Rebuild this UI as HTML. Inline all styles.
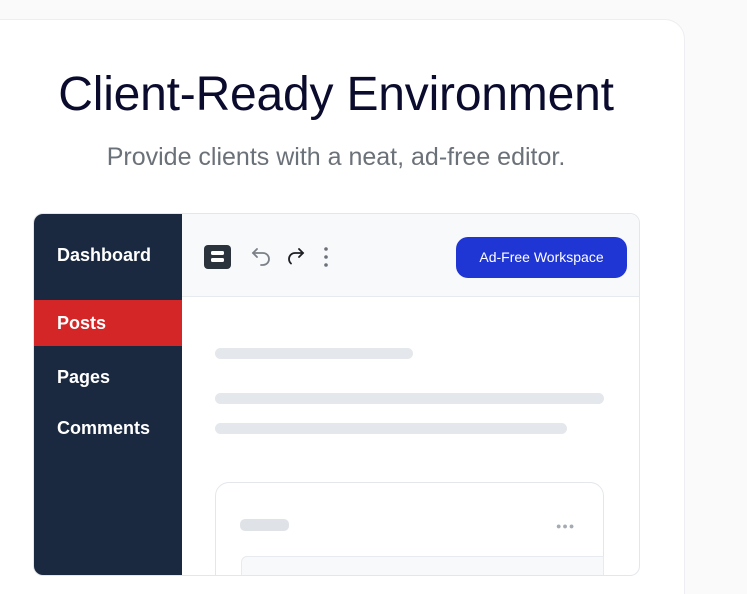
<!DOCTYPE html>
<html><head><meta charset="utf-8"><style>
*{margin:0;padding:0;box-sizing:border-box}
html,body{width:747px;height:594px;overflow:hidden}
body{background:#fafafa;font-family:"Liberation Sans",sans-serif;position:relative}
.card{position:absolute;left:-20px;top:19px;width:705px;height:575px;background:#fff;border:1px solid #eceef1;border-bottom:none;border-radius:20px 20px 0 0}
h1{position:absolute;left:0;width:672px;top:67px;text-align:center;font-size:48px;font-weight:400;color:#0b0b2e;letter-spacing:-0.2px}
.sub{position:absolute;left:0;width:672px;top:143px;text-align:center;font-size:25px;color:#6b7178}
.mock{position:absolute;left:33px;top:213px;width:607px;height:363px;border:1px solid #e3e7ec;border-radius:10px;overflow:hidden;background:#fff}
.side{position:absolute;left:0;top:0;width:148px;height:100%;background:#1a2840}
.side .t{position:absolute;left:23px;color:#fff;font-size:18px;font-weight:700}
.side .posts{position:absolute;left:0;top:86px;width:148px;height:46px;background:#d42626}
.tb{position:absolute;left:148px;top:0;right:0;height:83px;background:#f8f9fb;border-bottom:1px solid #e7eaee}
.btn{position:absolute;left:274px;top:23px;width:171px;height:41px;background:#1f35d4;border-radius:12px;color:#fff;font-size:14px;text-align:center;line-height:41px}
.ln{position:absolute;height:11px;background:#e4e7eb;border-radius:6px}
</style></head><body>
<div class="card"></div>
<h1>Client-Ready Environment</h1>
<div class="sub">Provide clients with a neat, ad-free editor.</div>
<div class="mock">
 <div class="side">
  <div class="t" style="top:31px">Dashboard</div>
  <div class="posts"></div>
  <div class="t" style="top:99px">Posts</div>
  <div class="t" style="top:153px">Pages</div>
  <div class="t" style="top:204px">Comments</div>
 </div>
 <div class="tb">
  <svg style="position:absolute;left:22px;top:31px" width="27" height="24" viewBox="0 0 27 24"><rect x="0" y="0" width="27" height="24" rx="4" fill="#2b333d"/><rect x="7" y="6" width="13" height="4" rx="1.5" fill="#fff"/><rect x="7" y="13" width="13" height="4" rx="1.5" fill="#fff"/></svg>
  <svg style="position:absolute;left:68px;top:32px" width="24" height="24" viewBox="0 0 24 24" fill="none" stroke="#7b8088" stroke-width="1.8" stroke-linecap="round"><path d="M7 3 L3 7 L7 11"/><path d="M3 7 H13 a6 6 0 0 1 0 12 H11"/></svg>
  <svg style="position:absolute;left:102px;top:32px" width="24" height="24" viewBox="0 0 24 24" fill="none" stroke="#1c1f24" stroke-width="1.8" stroke-linecap="round"><path d="M15 3 L19 7 L15 11"/><path d="M19 7 H11 a6 6 0 0 0 -6 6 a6 6 0 0 0 2 4.5"/></svg>
  <svg style="position:absolute;left:141px;top:32px" width="6" height="22" viewBox="0 0 6 22" fill="#6b7178"><circle cx="3" cy="3" r="1.8"/><circle cx="3" cy="11" r="1.8"/><circle cx="3" cy="19" r="1.8"/></svg>
  <div class="btn">Ad-Free Workspace</div>
 </div>
 <div style="position:absolute;left:148px;top:84px;right:0;bottom:0;overflow:hidden">
  <div class="ln" style="left:33px;top:50px;width:198px"></div>
  <div class="ln" style="left:33px;top:95px;width:389px"></div>
  <div class="ln" style="left:33px;top:125px;width:352px"></div>
  <div style="position:absolute;left:33px;top:184px;width:389px;height:140px;border:1px solid #e3e7ec;border-radius:14px;background:#fff"></div>
  <div style="position:absolute;left:58px;top:221px;width:49px;height:12px;background:#dfe3e8;border-radius:5px"></div>
  <div style="position:absolute;left:374px;top:223px;color:#a5abb3;font-size:9px;letter-spacing:1px">&#9679;&#9679;&#9679;</div>
  <div style="position:absolute;left:59px;top:258px;width:363px;height:40px;background:#f8f9fb;border:1px solid #e7eaee;border-radius:6px 0 0 0"></div>
 </div>
</div>
</body></html>
